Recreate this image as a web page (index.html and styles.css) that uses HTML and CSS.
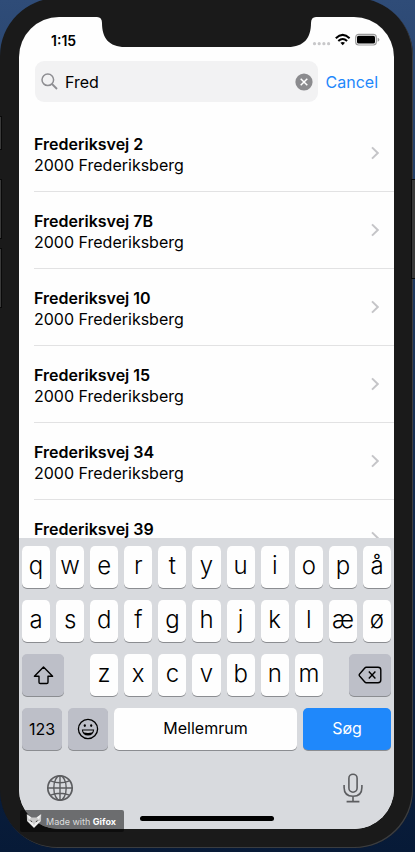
FILE: index.html
```html
<!DOCTYPE html>
<html lang="da">
<head>
<meta charset="utf-8">
<meta name="viewport" content="width=device-width, initial-scale=1">
<title>Adressesøgning</title>
<link rel="stylesheet" href="styles.css">
</head>
<body>
<div class="phone">
  <i class="side side-mute"></i><i class="side side-up"></i><i class="side side-down"></i><i class="side side-power"></i>
  <main class="screen">
    <svg class="notch" width="219" height="30" viewBox="0 0 219 30"><path d="M0 0H219Q214 0 214 6C214 21 207 30 191 30H28C12 30 5 21 5 6Q5 0 0 0Z" fill="#1a1a1a"/></svg>
    <header class="status">
      <time>1:15</time>
      <svg width="68" height="14" viewBox="0 0 68 14">
        <g fill="#c8c8ca"><circle cx="2.5" cy="10.7" r="1.6"/><circle cx="7.2" cy="10.7" r="1.6"/><circle cx="11.9" cy="10.7" r="1.6"/><circle cx="16.6" cy="10.7" r="1.6"/></g>
        <g fill="none" stroke="#000" stroke-width="2"><path d="M23.8 5.2Q30.7-1.4 37.6 5.2"/><path d="M26.3 8Q30.7 3.9 35.1 8"/></g>
        <path d="M28.4 9.8Q30.7 8 33 9.8L30.7 12.2Z"/>
        <rect x="43.7" y="1.4" width="20.6" height="10.6" rx="3" fill="#fff" stroke="#9b9b9b" stroke-width="1.2"/>
        <rect x="45" y="2.8" width="18" height="7.8" rx="1.6"/>
        <path d="M65.6 4.8Q67.4 5.4 67.4 6.8T65.6 8.8Z" fill="#9b9b9b"/>
      </svg>
    </header>
    <form class="search">
      <label class="field">
        <svg width="17" height="17" viewBox="0 0 17 17" fill="none" stroke="#8e8e92" stroke-width="1.5"><circle cx="6.8" cy="6.8" r="5.8"/><path d="M11 11L16 16" stroke-width="1.8"/></svg>
        <input type="text" value="Fred" aria-label="Søg adresse">
        <button class="clear" type="button" aria-label="Ryd"><svg width="18" height="18" viewBox="0 0 18 18"><circle cx="9" cy="9" r="8.6" fill="#8b8b8e"/><path d="M5.7 5.7L12.3 12.3M12.3 5.7L5.7 12.3" stroke="#fff" stroke-width="1.5"/></svg></button>
      </label>
      <button class="cancel" type="button">Cancel</button>
    </form>
    <ul class="results">
      <li><a href="#"><span><strong>Frederiksvej 2</strong>2000 Frederiksberg</span><svg class="chev" viewBox="0 0 8 14"><path d="M1 1.4L6.8 7L1 12.6"/></svg></a></li>
      <li><a href="#"><span><strong>Frederiksvej 7B</strong>2000 Frederiksberg</span><svg class="chev" viewBox="0 0 8 14"><path d="M1 1.4L6.8 7L1 12.6"/></svg></a></li>
      <li><a href="#"><span><strong>Frederiksvej 10</strong>2000 Frederiksberg</span><svg class="chev" viewBox="0 0 8 14"><path d="M1 1.4L6.8 7L1 12.6"/></svg></a></li>
      <li><a href="#"><span><strong>Frederiksvej 15</strong>2000 Frederiksberg</span><svg class="chev" viewBox="0 0 8 14"><path d="M1 1.4L6.8 7L1 12.6"/></svg></a></li>
      <li><a href="#"><span><strong>Frederiksvej 34</strong>2000 Frederiksberg</span><svg class="chev" viewBox="0 0 8 14"><path d="M1 1.4L6.8 7L1 12.6"/></svg></a></li>
      <li><a href="#"><span><strong>Frederiksvej 39</strong></span><svg class="chev" viewBox="0 0 8 14"><path d="M1 1.4L6.8 7L1 12.6"/></svg></a></li>
    </ul>
    <section class="keyboard" aria-label="Tastatur">
      <div class="keys"><button>q</button><button>w</button><button>e</button><button>r</button><button>t</button><button>y</button><button>u</button><button>i</button><button>o</button><button>p</button><button>å</button></div>
      <div class="keys"><button>a</button><button>s</button><button>d</button><button>f</button><button>g</button><button>h</button><button>j</button><button>k</button><button>l</button><button>æ</button><button>ø</button></div>
      <div class="keys">
        <button class="dark shift" aria-label="Skift"><svg width="21" height="19" viewBox="0 0 21 19" fill="none" stroke="#000" stroke-width="1.4" stroke-linejoin="round"><path d="M10.5 1L19.6 10.2H15V16.2Q15 17.5 13.7 17.5H7.3Q6 17.5 6 16.2V10.2H1.4Z"/></svg></button>
        <div class="keys letters"><button>z</button><button>x</button><button>c</button><button>v</button><button>b</button><button>n</button><button>m</button></div>
        <button class="dark shift" aria-label="Slet"><svg width="24" height="18" viewBox="0 0 24 18" fill="none" stroke="#000" stroke-width="1.4" stroke-linejoin="round"><path d="M8.2 1.3H20Q22.8 1.3 22.8 4V14Q22.8 16.7 20 16.7H8.2Q7.4 16.7 6.8 16L1.6 10Q.8 9 1.6 8L6.8 2Q7.4 1.3 8.2 1.3Z"/><path d="M10.8 5.6L17.4 12.4M17.4 5.6L10.8 12.4"/></svg></button>
      </div>
      <div class="keys">
        <button class="dark mode">123</button>
        <button class="dark mode" aria-label="Emoji"><svg width="22" height="22" viewBox="0 0 22 22"><circle cx="11" cy="11" r="9.6" fill="none" stroke="#000" stroke-width="1.3"/><ellipse cx="7.8" cy="7.6" rx="1.1" ry="1.4"/><ellipse cx="14.2" cy="7.6" rx="1.1" ry="1.4"/><path d="M4.8 11.6H17.2Q16.6 17.6 11 17.6T4.8 11.6Z"/><path d="M6 12.4H16Q15.8 14 14.8 14.6Q11 15.4 7.2 14.6Q6.2 14 6 12.4Z" fill="#c6c7ce"/></svg></button>
        <button class="space">Mellemrum</button>
        <button class="go">Søg</button>
      </div>
      <div class="tools">
        <button aria-label="Skift tastatur"><svg width="28" height="28" viewBox="0 0 28 28" fill="none" stroke="#5c5d60" stroke-width="1.4"><circle cx="14" cy="14" r="12.2" stroke-width="1.7"/><ellipse cx="14" cy="14" rx="6.2" ry="12.2"/><path d="M14 2V26M2 14H26M4.6 6.8Q14 10.6 23.4 6.8M4.6 21.2Q14 17.4 23.4 21.2"/></svg></button>
        <button aria-label="Diktering"><svg width="20" height="30" viewBox="0 0 20 30" fill="none" stroke="#5c5d60" stroke-width="1.6"><rect x="5.9" y="1.2" width="8.2" height="18" rx="4.1"/><path d="M1.1 12V14.5C1.1 20.2 4.6 23.2 10 23.2S18.9 20.2 18.9 14.5V12M10 23.2V28.4M3.6 28.6H16.4"/></svg></button>
      </div>
      <div class="home"></div>
    </section>
  </main>
  <div class="badge">
    <svg width="16" height="14" viewBox="0 0 16 14"><path d="M.8.3L5.4 3.4H10.6L15.2.3L15 6.8L8 13.7L1 6.8Z" fill="#c9c9c9"/><path d="M.8.3L5.4 3.4L3 5.6ZM15.2.3L10.6 3.4L13 5.6ZM1 6.8L6 7.4L8 11.6L10 7.4L15 6.8L8 13.7Z" fill="#eee"/><path d="M3.4 6.2L6 7L6.3 8.6ZM12.6 6.2L10 7L9.7 8.6Z" fill="#333"/></svg>
    <span>Made with <b>Gifox</b></span>
  </div>
</div>
</body>
</html>
```
FILE: styles.css
```css
* { box-sizing: border-box; }
html { height: 100%; }
body {
  margin: 0;
  height: 100%;
  overflow: hidden;
  display: flex;
  background: linear-gradient(#2f4c78, #244068 20%, #12294c 60%, #071a37);
  color: #000;
  font-family: Inter, "Liberation Sans", sans-serif;
}
button, input { font: inherit; color: inherit; border: 0; padding: 0; margin: 0; background: none; }
svg { display: block; flex: none; }

.phone {
  position: relative;
  flex: 1;
  min-width: 0;
  display: flex;
  margin: -2px 2px 4px 0;
  padding: 19px;
  background: #1a1a1a;
  border-radius: 58px;
  box-shadow: inset -1px -1px 0 #3b3d40;
}
.side { position: absolute; left: 0; width: 1px; background: #3a3a3a; outline: 1px solid #0a0a0a; }
.side-mute { top: 119px; height: 32px; }
.side-up { top: 182px; height: 58px; }
.side-down { top: 251px; height: 58px; }
.side-power { left: auto; right: -2px; width: 3px; top: 182px; height: 98px; }

.screen {
  position: relative;
  flex: 1;
  min-width: 0;
  display: flex;
  flex-direction: column;
  overflow: hidden;
  background: #fefefe;
  border-radius: 40px;
}
.notch { position: absolute; top: 0; left: 50%; margin-left: -110px; }

.status {
  display: flex;
  justify-content: space-between;
  align-items: center;
  height: 44px;
  padding: 2px 14px 0 32px;
  font-size: 14px;
  font-weight: 600;
}
.search { display: flex; align-items: center; padding: 0 16px 13px; gap: 8px; }
.field {
  flex: 1;
  min-width: 0;
  display: flex;
  align-items: center;
  gap: 7px;
  height: 41px;
  padding: 0 5px 0 6px;
  background: #f2f2f3;
  border-radius: 9px;
}
.field input { flex: 1; min-width: 0; outline: 0; font-size: 16px; }
.cancel { font-size: 16px; color: #1f88fb; }

.results { flex: 1; min-height: 0; overflow: hidden; list-style: none; margin: 0; padding: 0 0 0 15px; }
.results li { height: 77px; border-bottom: 1px solid #e2e2e3; }
.results a {
  display: flex;
  justify-content: space-between;
  padding: 19px 15px 0 0;
  color: inherit;
  text-decoration: none;
  font-size: 16px;
  line-height: 21px;
}
.results strong { display: block; font-weight: 600; }
.chev { width: 8px; height: 14px; margin-top: 12px; fill: none; stroke: #c5c5c8; stroke-width: 2; }

.keyboard {
  display: flex;
  flex-direction: column;
  gap: 12px;
  padding: 8px 3px;
  background: #d8dade;
}
.keys { display: flex; gap: 6px; }
.keys button {
  flex: 1 1 0;
  min-width: 0;
  height: 42px;
  display: flex;
  align-items: center;
  justify-content: center;
  padding-bottom: 3px;
  border-radius: 5px;
  background: #fefefe;
  box-shadow: 0 1px 0 #8b8d91;
  font-size: 24px;
  font-weight: 300;
}
.keys .letters { flex: 1; min-width: 0; margin: 0 20px; }
.keys .dark { background: #bdbfc8; padding: 0; }
.keys .shift { flex: 0 0 42px; }
.keys .mode { flex: 0 0 40px; font-size: 16px; font-weight: 400; }
.keys .space { flex: 1; font-size: 16px; font-weight: 400; }
.keys .go { flex: 0 0 88px; background: #1f88fb; color: #fff; font-size: 16px; font-weight: 400; }
.tools { display: flex; justify-content: space-between; align-items: center; height: 52px; padding: 0 28px 0 24px; }
.home { align-self: center; width: 134px; height: 5px; margin-top: -10px; border-radius: 3px; background: #000; }

.badge {
  position: absolute;
  left: 20px;
  bottom: 16px;
  display: flex;
  align-items: center;
  gap: 4px;
  height: 22px;
  padding: 0 8px 0 6px;
  border-radius: 2px;
  background: rgba(0, 0, 0, .5);
  color: #ddd;
  font-size: 9px;
  white-space: nowrap;
}
.badge b { color: #fff; }
```
